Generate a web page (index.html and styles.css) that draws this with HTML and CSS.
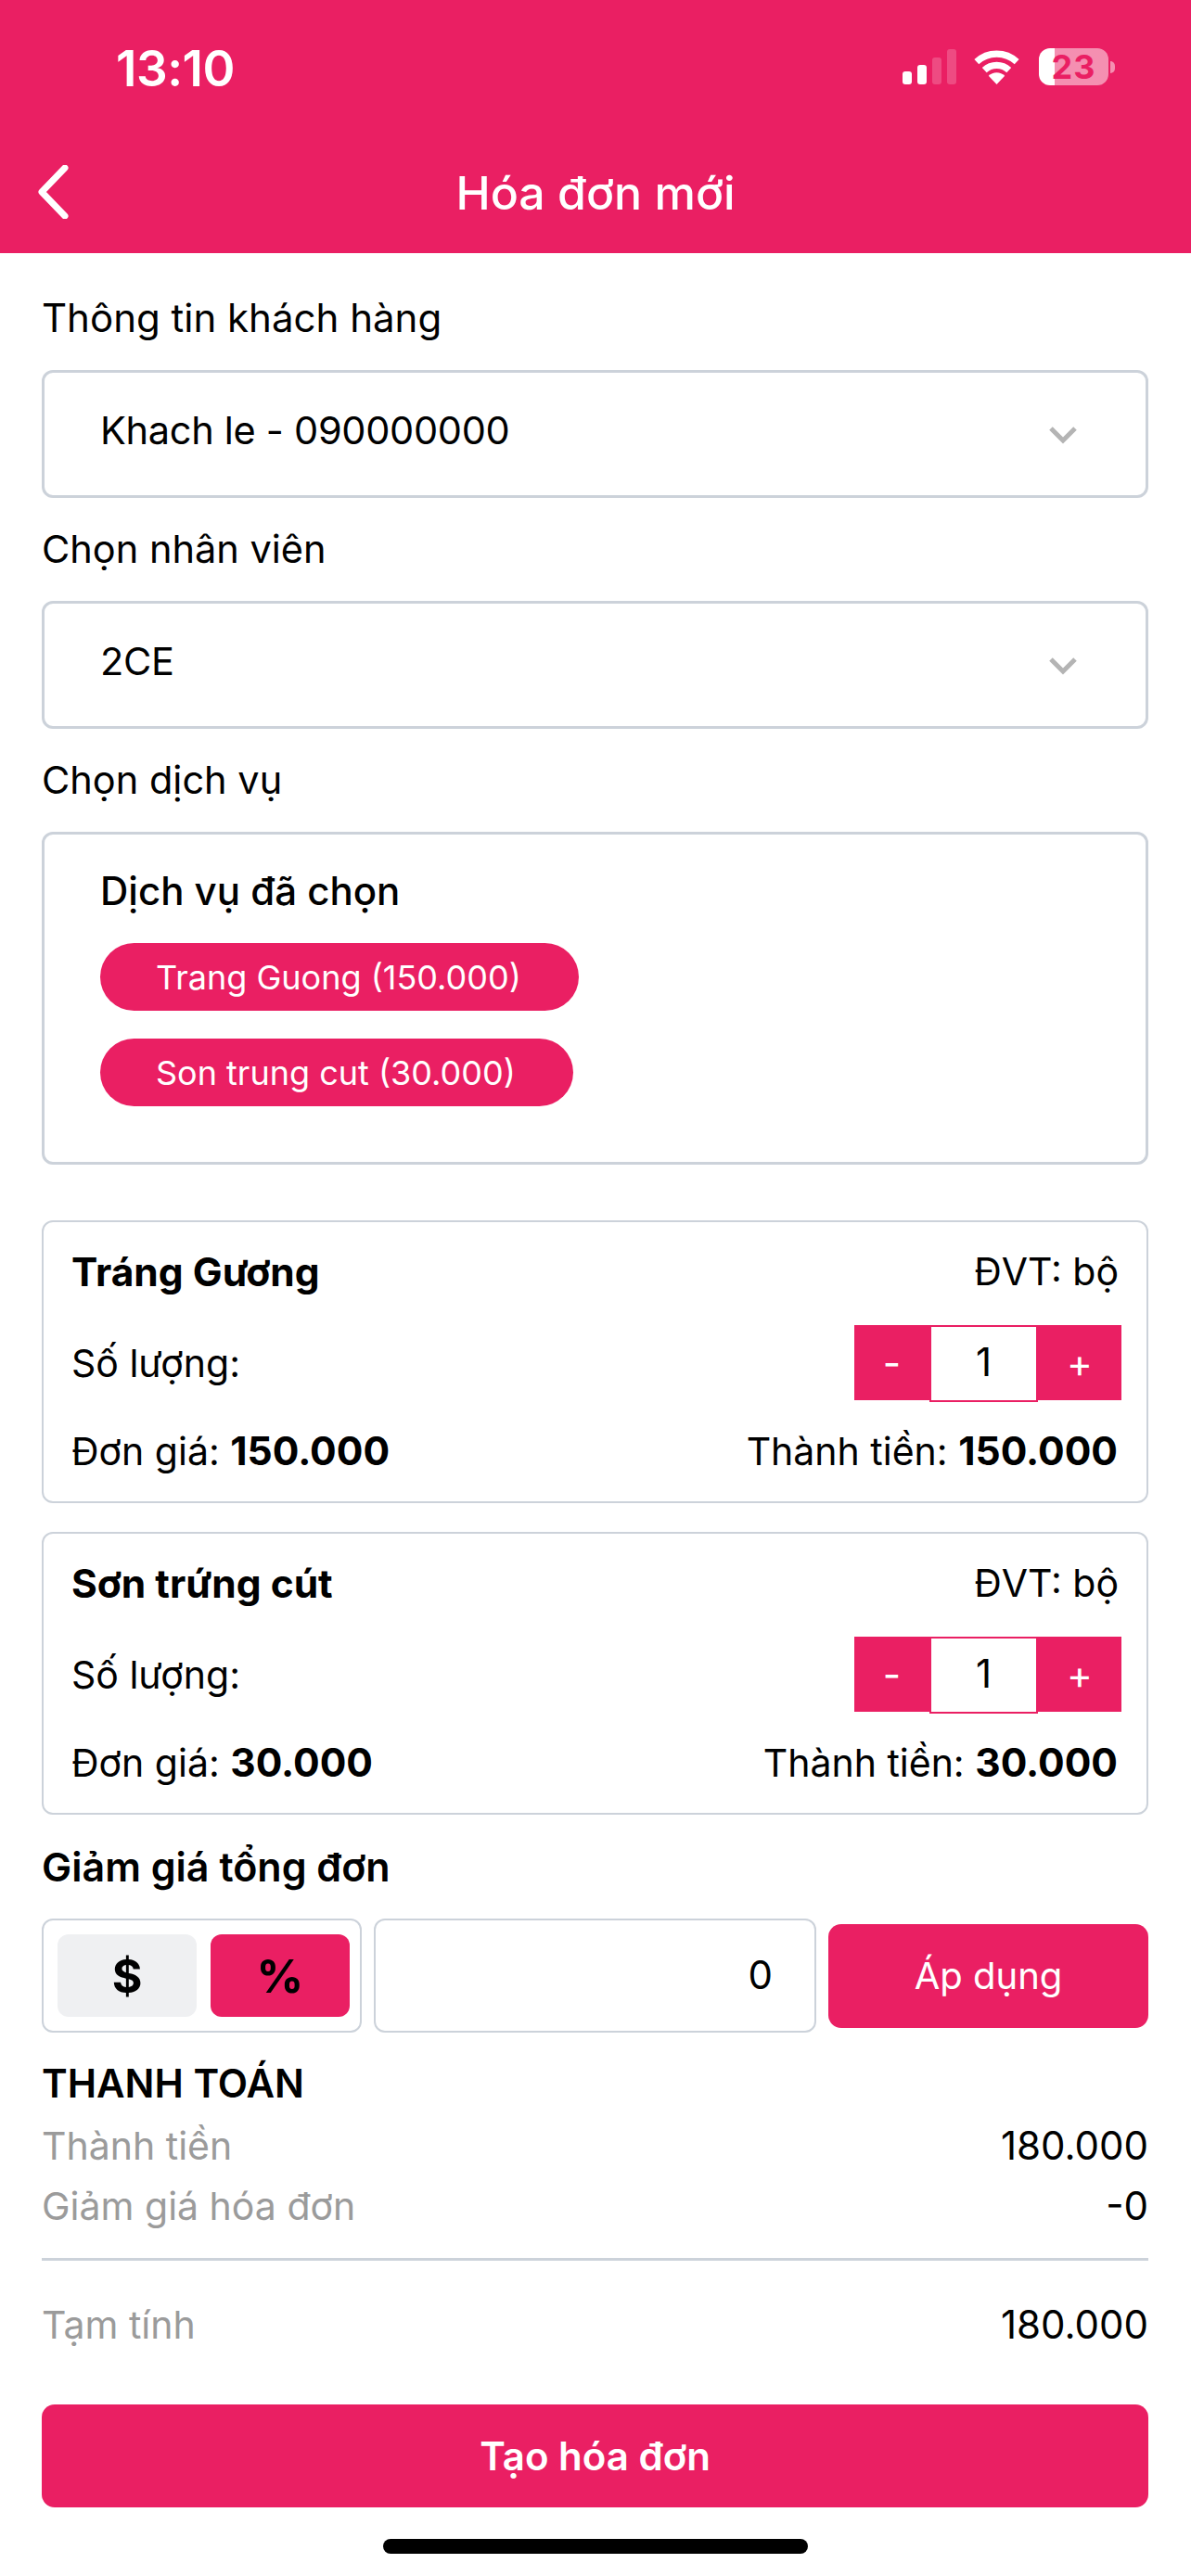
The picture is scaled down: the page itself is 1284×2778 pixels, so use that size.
FILE: index.html
```html
<!doctype html>
<html lang="vi">
<head>
    <meta charset="utf-8">
    <meta name="viewport" content="width=device-width, initial-scale=1">
    <title>Hóa đơn mới</title>
    <link rel="stylesheet" href="styles.css">
</head>

<body>

    <header class="header">
        <div class="status">
            <span class="time">13:10</span>
            <div class="status-icons">
                <div class="signal">
                    <i class="sig sig1"></i>
                    <i class="sig sig2"></i>
                    <i class="sig sig3"></i>
                    <i class="sig sig4"></i>
                </div>
                <svg class="wifi" width="53" height="38" viewBox="0 0 51 37">
                    <path d="M4.4 13.3A31 31 0 0 1 46.6 13.3" fill="none" stroke="#fff" stroke-width="7"/>
                    <path d="M12.6 22A19 19 0 0 1 38.4 22" fill="none" stroke="#fff" stroke-width="7"/>
                    <path d="M25.5 37L17 28A12 12 0 0 1 34 28Z" fill="#fff"/>
                </svg>
                <div class="battery">23</div>
                <div class="battery-nub"></div>
            </div>
        </div>
        <div class="nav">
            <svg class="back" width="34" height="58" viewBox="0 0 34 58">
                <path d="M30 3L5 29L30 55" fill="none" stroke="#fff" stroke-width="7" stroke-linecap="round" stroke-linejoin="round"/>
            </svg>
            <h1 class="title">Hóa đơn mới</h1>
        </div>
    </header>

    <main class="page">
        <div class="label first">Thông tin khách hàng</div>
        <div class="select">
            <span>Khach le - 090000000</span>
            <svg width="32" height="20" viewBox="0 0 32 20"><path d="M3 3L16 16L29 3" fill="none" stroke="#b4b4b4" stroke-width="5"/></svg>
        </div>

        <div class="label">Chọn nhân viên</div>
        <div class="select">
            <span>2CE</span>
            <svg width="32" height="20" viewBox="0 0 32 20"><path d="M3 3L16 16L29 3" fill="none" stroke="#b4b4b4" stroke-width="5"/></svg>
        </div>

        <div class="label">Chọn dịch vụ</div>
        <div class="picked">
            <div class="picked-title">Dịch vụ đã chọn</div>
            <div class="chip">Trang Guong (150.000)</div>
            <div class="chip">Son trung cut (30.000)</div>
        </div>

        <div class="card">
            <div class="row card-head">
                <b>Tráng Gương</b>
                <span>ĐVT: bộ</span>
            </div>
            <div class="row card-qty">
                <span>Số lượng:</span>
                <div class="stepper">
                    <div class="step minus">-</div>
                    <div class="qty">1</div>
                    <div class="step plus">+</div>
                </div>
            </div>
            <div class="row card-foot">
                <span>Đơn giá: <b>150.000</b></span>
                <span>Thành tiền: <b>150.000</b></span>
            </div>
        </div>

        <div class="card second">
            <div class="row card-head">
                <b>Sơn trứng cút</b>
                <span>ĐVT: bộ</span>
            </div>
            <div class="row card-qty">
                <span>Số lượng:</span>
                <div class="stepper">
                    <div class="step minus">-</div>
                    <div class="qty">1</div>
                    <div class="step plus">+</div>
                </div>
            </div>
            <div class="row card-foot">
                <span>Đơn giá: <b>30.000</b></span>
                <span>Thành tiền: <b>30.000</b></span>
            </div>
        </div>

        <div class="label heavy discount">Giảm giá tổng đơn</div>
        <div class="discount-row">
            <div class="toggle">
                <div class="toggle-btn">$</div>
                <div class="toggle-btn active">%</div>
            </div>
            <div class="amount">0</div>
            <div class="apply">Áp dụng</div>
        </div>

        <div class="label heavy pay">THANH TOÁN</div>
        <div class="row sum">
            <span class="muted">Thành tiền</span>
            <span>180.000</span>
        </div>
        <div class="row sum">
            <span class="muted">Giảm giá hóa đơn</span>
            <span>-0</span>
        </div>
        <div class="divider"></div>
        <div class="row sum">
            <span class="muted">Tạm tính</span>
            <span>180.000</span>
        </div>

        <div class="submit">Tạo hóa đơn</div>
        <div class="home"></div>
    </main>

</body>

</html>
```

FILE: styles.css
```css
html {
    width: 100%;
    height: 100%;
}

body {
    margin: 0;
    background-color: #fff;
    color: #000;
    font-family: 'Inter', 'Liberation Sans', sans-serif;
    font-size: 42px;
}

b {
    font-weight: 700;
}

.header {
    height: 273px;
    background-color: #ea1f63;
    color: #fff;
}

.status {
    height: 150px;
    display: flex;
    justify-content: space-between;
    align-items: flex-start;
    padding: 51px 82px 0 125px;
    box-sizing: border-box;
}

.time {
    font-size: 53px;
    font-weight: 600;
    line-height: 46px;
    letter-spacing: -.5px;
}

.status-icons {
    display: flex;
    align-items: flex-end;
    height: 41px;
}

.signal {
    display: flex;
    align-items: flex-end;
    gap: 6px;
    margin-right: 17px;
    margin-bottom: 1px;
}

.sig {
    width: 10px;
    border-radius: 3px;
    background-color: #fff;
}

.sig1 { height: 14px; }
.sig2 { height: 21px; }
.sig3 { height: 29px; background-color: rgba(255, 255, 255, .2); }
.sig4 { height: 38px; background-color: rgba(255, 255, 255, .2); }

.wifi {
    margin-right: 19px;
    margin-bottom: 1px;
}

.battery {
    width: 75px;
    height: 40px;
    border-radius: 12px;
    background: linear-gradient(90deg, #fff 17px, rgba(255, 255, 255, .5) 17px);
    color: #ea1f63;
    font-size: 36px;
    font-weight: 700;
    letter-spacing: 1px;
    line-height: 40px;
    text-align: center;
}

.battery-nub {
    width: 5px;
    height: 13px;
    margin: 0 0 13px 2px;
    border-radius: 0 6px 6px 0;
    background-color: rgba(255, 255, 255, .5);
}

.nav {
    position: relative;
    height: 123px;
    display: flex;
    align-items: center;
    justify-content: center;
}

.back {
    position: absolute;
    left: 40px;
    top: 28px;
}

.title {
    margin: 0 0 8px;
    font-size: 50px;
    font-weight: 500;
}

.page {
    padding: 0 46px 0 45px;
}

.label {
    height: 58px;
    line-height: 58px;
    margin: 26px 0 27px;
    font-size: 41.5px;
    font-weight: 400;
}

.label.first {
    margin-top: 41px;
    font-size: 42px;
}

.heavy {
    font-size: 42px;
    font-weight: 600;
}

.select {
    height: 138px;
    box-sizing: border-box;
    display: flex;
    justify-content: space-between;
    align-items: center;
    padding: 0 73px 8px 60px;
    border: 3px solid #ccd2da;
    border-radius: 12px;
    font-size: 41.5px;
    letter-spacing: -.3px;
}

.select svg {
    margin-top: 10px;
}

.picked {
    height: 359px;
    box-sizing: border-box;
    padding: 32px 0 0 60px;
    border: 3px solid #ccd2da;
    border-radius: 12px;
}

.picked-title {
    height: 58px;
    line-height: 58px;
    font-weight: 500;
    margin-bottom: 27px;
}

.chip {
    width: fit-content;
    height: 73px;
    line-height: 75px;
    padding: 0 62px 0 60px;
    margin-bottom: 30px;
    border-radius: 37px;
    background-color: #ea1f63;
    color: #fff;
    font-size: 36px;
}

.row {
    display: flex;
    justify-content: space-between;
    align-items: center;
}

.card {
    height: 305px;
    box-sizing: border-box;
    margin-top: 60px;
    padding: 24px 30px 0;
    border: 2px solid #ccd2da;
    border-radius: 12px;
    font-size: 41px;
}

.card.second {
    margin-top: 31px;
}

.card b {
    font-size: 42.5px;
    font-weight: 700;
}

.card-head {
    height: 58px;
}

.card-qty {
    height: 81px;
    margin-top: 29px;
}

.card-foot {
    height: 58px;
    margin-top: 25px;
    padding-right: 1px;
}

.stepper {
    display: flex;
    height: 81px;
    margin-right: -3px;
}

.step {
    background-color: #ea1f63;
    color: #fff;
    font-size: 42px;
    line-height: 81px;
    text-align: center;
}

.minus {
    width: 81px;
}

.plus {
    width: 90px;
}

.qty {
    width: 117px;
    box-sizing: border-box;
    height: 83px;
    font-size: 42px;
    line-height: 75px;
    text-align: center;
    border: 2px solid #ea1f63;
}

.discount {
    margin-top: 27px;
    margin-bottom: 27px;
    font-size: 43px;
}

.discount-row {
    display: flex;
    align-items: center;
    gap: 13px;
}

.toggle {
    width: 345px;
    height: 123px;
    box-sizing: border-box;
    display: flex;
    gap: 15px;
    padding: 15px 0 15px 15px;
    border: 2px solid #ccd2da;
    border-radius: 12px;
}

.toggle-btn {
    width: 150px;
    border-radius: 12px;
    background-color: #eff0f2;
    font-size: 50px;
    font-weight: 700;
    line-height: 90px;
    text-align: center;
}

.toggle-btn.active {
    background-color: #ea1f63;
}

.amount {
    width: 477px;
    height: 123px;
    box-sizing: border-box;
    padding-right: 45px;
    border: 2px solid #ccd2da;
    border-radius: 12px;
    line-height: 118px;
    text-align: right;
}

.apply {
    flex: 1;
    height: 112px;
    border-radius: 14px;
    background-color: #ea1f63;
    color: #fff;
    font-size: 40px;
    line-height: 112px;
    text-align: center;
}

.pay {
    margin-top: 26px;
    margin-bottom: 5px;
}

.sum {
    height: 65px;
}

.muted {
    color: #9b9b9b;
    font-size: 41px;
}

.divider {
    height: 3px;
    margin: 24px 0 36px;
    background-color: #ccd2da;
}

.submit {
    height: 111px;
    margin-top: 54px;
    border-radius: 14px;
    background-color: #ea1f63;
    color: #fff;
    font-weight: 600;
    line-height: 112px;
    text-align: center;
}

.home {
    width: 458px;
    height: 16px;
    margin: 34px auto 0;
    border-radius: 8px;
    background-color: #000;
}
```
